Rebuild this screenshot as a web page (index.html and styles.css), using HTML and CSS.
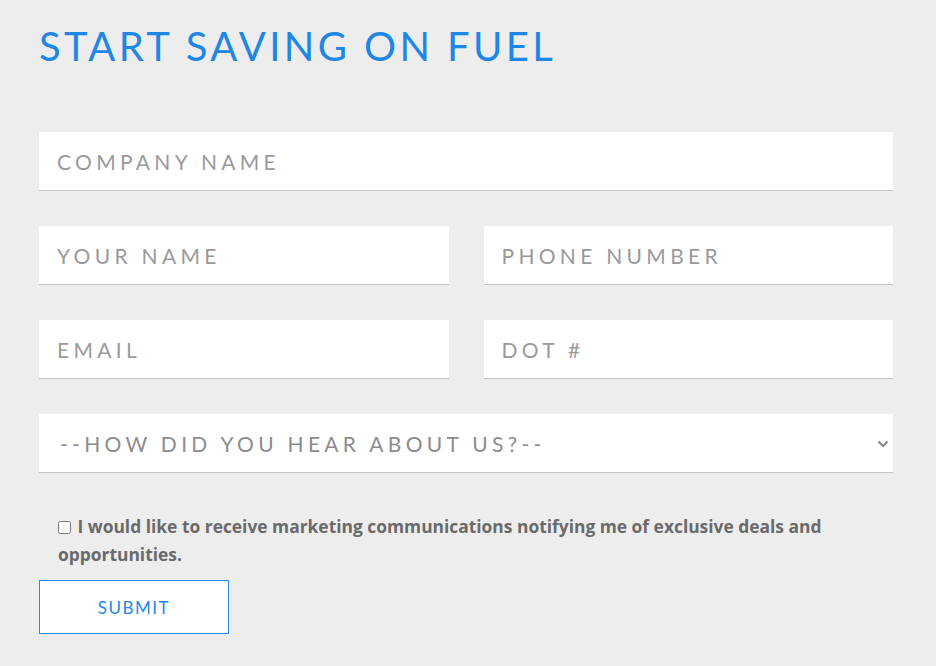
FILE: index.html
```html
<!DOCTYPE html>
<html lang="en">
<head>
<meta charset="UTF-8">
<meta name="viewport" content="width=device-width, initial-scale=1.0">
<title>Start Saving On Fuel</title>
<link rel="stylesheet" href="styles.css">
</head>
<body>
<div class="container">
    <h1>START SAVING ON FUEL</h1>
    <form id="fuel-form">
        <div class="row">
            <input type="text" name="company" placeholder="COMPANY NAME">
        </div>
        <div class="row two">
            <input type="text" name="name" placeholder="YOUR NAME">
            <input type="text" name="phone" placeholder="PHONE NUMBER">
        </div>
        <div class="row two">
            <input type="text" name="email" placeholder="EMAIL">
            <input type="text" name="dot" placeholder="DOT #">
        </div>
        <div class="row select-wrap">
            <select name="source">
                <option>--HOW DID YOU HEAR ABOUT US?--</option>
            </select>
            <svg class="chevron" width="12" height="8" viewBox="0 0 12 8"><path d="M1.5 1.5 L6 6 L10.5 1.5" fill="none" stroke="#8a8a8a" stroke-width="2.2"/></svg>
        </div>
        <label class="optin">
            <input type="checkbox" name="marketing">
            I would like to receive marketing communications notifying me of exclusive deals and opportunities.
        </label>
        <input type="submit" value="SUBMIT">
    </form>
</div>
</body>
</html>
```

FILE: styles.css
```css
body {
    font-family: Lato, "Open Sans", sans-serif;
    margin: 0;
    padding: 0;
    background-color: #ededed;
}
.container {
    padding: 22px 43px 0 39px;
}
h1 {
    margin: 0 0 62px 0;
    font-size: 40px;
    font-weight: 400;
    letter-spacing: 3.4px;
    color: #1e87e5;
}
.row {
    margin-bottom: 35px;
}
.row.two {
    display: grid;
    grid-template-columns: 1fr 1fr;
    gap: 35px;
}
input[type="text"], select {
    display: block;
    box-sizing: border-box;
    width: 100%;
    height: 59px;
    padding: 0 18px;
    border: none;
    border-bottom: 1px solid #c4c4c4;
    border-radius: 0;
    background-color: #fff;
    font-family: Lato, "Open Sans", sans-serif;
    font-size: 21px;
    letter-spacing: 4.3px;
    color: #555;
    outline: none;
}
input[type="text"]::placeholder {
    color: #9a9a9a;
}
.select-wrap {
    position: relative;
    margin-bottom: 39px;
}
select {
    -webkit-appearance: none;
    appearance: none;
    padding-left: 21px;
    color: #8c8c8c;
}
.chevron {
    position: absolute;
    right: 4px;
    top: 26px;
}
.optin {
    display: block;
    padding-left: 19px;
    margin-bottom: 12px;
    font-family: "Open Sans", sans-serif;
    font-size: 17.4px;
    font-weight: 700;
    line-height: 28px;
    color: #6a6a6a;
}
.optin input {
    width: 13px;
    height: 13px;
    margin: 0 2px 0 0;
    vertical-align: -1px;
}
input[type="submit"] {
    width: 190px;
    height: 54px;
    background-color: #fff;
    border: 1px solid #2a8ae6;
    border-radius: 0;
    font-family: Lato, "Open Sans", sans-serif;
    font-size: 17px;
    letter-spacing: 1.5px;
    color: #1e87e5;
    cursor: pointer;
}
```
